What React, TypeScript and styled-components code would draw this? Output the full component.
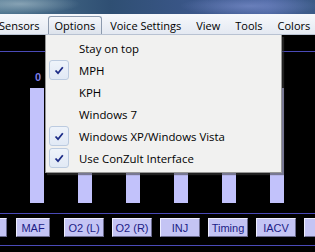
import React from 'react';
import styled, { createGlobalStyle } from 'styled-components';

const GlobalStyle = createGlobalStyle`
  html, body {
    margin: 0;
    padding: 0;
    background: #000;
  }
`;

const menuItems = ['Sensors', 'Options', 'Voice Settings', 'View', 'Tools', 'Colors'];

const options = [
  { label: 'Stay on top', checked: false },
  { label: 'MPH', checked: true },
  { label: 'KPH', checked: false },
  { label: 'Windows 7', checked: false },
  { label: 'Windows XP/Windows Vista', checked: true },
  { label: 'Use ConZult Interface', checked: true },
];

const sensorButtons = [
  { label: '', width: 40 },
  { label: 'MAF', width: 34 },
  { label: 'O2 (L)', width: 40 },
  { label: 'O2 (R)', width: 40 },
  { label: 'INJ', width: 40 },
  { label: 'Timing', width: 40 },
  { label: 'IACV', width: 40 },
  { label: 'V', width: 40 },
];

// only the first gauge's reading shows; the rest sit under the open menu
const gauges = [true, false, false, false, false, false];

const App = () => {
  return (
    <Window>
      <GlobalStyle />
      <TitleStrip />
      <MenuBar>
        {menuItems.map((m) => (
          <MenuItem key={m} $open={m === 'Options'}>
            {m}
          </MenuItem>
        ))}
      </MenuBar>
      <Content>
        <GaugeArea>
          {gauges.map((shown, i) => (
            <Gauge key={i}>
              <GaugeValue>{shown ? '0' : ''}</GaugeValue>
              <Bar />
            </Gauge>
          ))}
        </GaugeArea>
        <ButtonStrip>
          {sensorButtons.map((b, i) => (
            <SensorButton key={i} $w={b.width}>
              {b.label}
            </SensorButton>
          ))}
        </ButtonStrip>
        <Dropdown>
          {options.map((o) => (
            <DropItem key={o.label}>
              <CheckSlot $on={o.checked}>
                {o.checked && (
                  <svg width="10" height="9" viewBox="0 0 10 9">
                    <path d="M1.5 4.5 L4 7.2 L8.8 1.2" fill="none" stroke="#1b2a86" strokeWidth="1.8" />
                  </svg>
                )}
              </CheckSlot>
              <DropLabel>{o.label}</DropLabel>
            </DropItem>
          ))}
        </Dropdown>
      </Content>
    </Window>
  );
};

export default App;

const Window = styled.div`
  width: 315px;
  height: 252px;
  overflow: hidden;
  background: #000;
  display: flex;
  flex-direction: column;
`;

const TitleStrip = styled.div`
  height: 14px;
  flex: none;
  background:
    radial-gradient(ellipse 60px 10px at 20px 4px, rgba(150, 175, 190, 0.8), transparent),
    radial-gradient(ellipse 70px 10px at 250px 6px, rgba(120, 140, 200, 0.7), transparent),
    linear-gradient(90deg, #4f7690 0%, #2f4f73 35%, #3a5688 60%, #4a64a0 85%, #3b5a86 100%);
`;

const MenuBar = styled.div`
  height: 21px;
  flex: none;
  display: flex;
  align-items: stretch;
  margin-left: -8px;
  background: linear-gradient(#f6f8fc, #e4e9f2);
  border-bottom: 1px solid #b8c2d2;
  box-sizing: border-box;
  font-family: 'Open Sans', 'Liberation Sans', sans-serif;
  font-size: 11px;
  color: #000;
`;

const MenuItem = styled.div<{ $open: boolean }>`
  display: flex;
  align-items: center;
  padding: 0 6px;
  margin-right: 1px;
  margin-top: 2px;
  border: 1px solid ${(p) => (p.$open ? '#8c9aae' : 'transparent')};
  border-bottom: none;
  border-radius: 3px 3px 0 0;
  background: ${(p) => (p.$open ? 'linear-gradient(#f4f6fa, #dde3ec)' : 'transparent')};
  white-space: nowrap;
`;

const Content = styled.div`
  position: relative;
  flex: 1;
  display: flex;
  flex-direction: column;
`;

const GaugeArea = styled.div`
  margin-top: 16px;
  border-top: 1px solid #4a4ab8;
  display: flex;
  gap: 34px;
  padding-left: 30px;
  height: 152px;
`;

const Gauge = styled.div`
  width: 14px;
  display: flex;
  flex-direction: column;
  align-items: center;
`;

const GaugeValue = styled.div`
  margin-top: 19px;
  height: 17px;
  font-family: 'Liberation Sans', sans-serif;
  font-weight: bold;
  font-size: 11px;
  color: #7e7ee6;
  padding-left: 2px;
`;

const Bar = styled.div`
  width: 14px;
  height: 115px;
  background: #c2c2fb;
`;

const ButtonStrip = styled.div`
  margin-top: 9px;
  border-top: 1px solid #4a4ab8;
  border-bottom: 1px solid #4a4ab8;
  display: flex;
  align-items: flex-start;
  gap: 8px;
  margin-left: -33px;
  padding: 4px 0 8px;
`;

const SensorButton = styled.div<{ $w: number }>`
  flex: none;
  width: ${(p) => p.$w}px;
  height: 19px;
  box-sizing: border-box;
  display: flex;
  align-items: center;
  justify-content: center;
  background: #c4c4f4;
  border-top: 1px solid #eeeeff;
  border-left: 1px solid #eeeeff;
  border-right: 1px solid #6a6a8c;
  border-bottom: 1px solid #6a6a8c;
  font-family: 'Liberation Sans', sans-serif;
  font-size: 11px;
  color: #1c1c86;
  white-space: nowrap;
  &:nth-child(2) {
    margin-left: 1px;
    margin-right: 6px;
  }
`;

const Dropdown = styled.div`
  position: absolute;
  left: 45px;
  top: 0;
  width: 237px;
  box-sizing: border-box;
  padding: 2px 2px 3px;
  background: #f1f1f0;
  border: 1px solid #979797;
  border-top: none;
  box-shadow: 2px 2px 1px rgba(60, 60, 60, 0.55);
  font-family: 'Open Sans', 'Liberation Sans', sans-serif;
  font-size: 11.4px;
  color: #000;
`;

const DropItem = styled.div`
  height: 22px;
  display: flex;
  align-items: center;
`;

const CheckSlot = styled.div<{ $on: boolean }>`
  width: 20px;
  height: 20px;
  box-sizing: border-box;
  margin-left: 1px;
  display: flex;
  align-items: center;
  justify-content: center;
  border-radius: 3px;
  border: 1px solid ${(p) => (p.$on ? '#bccbe0' : 'transparent')};
  background: ${(p) => (p.$on ? 'linear-gradient(#eef3fa, #e1e9f5)' : 'transparent')};
`;

const DropLabel = styled.span`
  margin-left: 10px;
  white-space: nowrap;
`;
